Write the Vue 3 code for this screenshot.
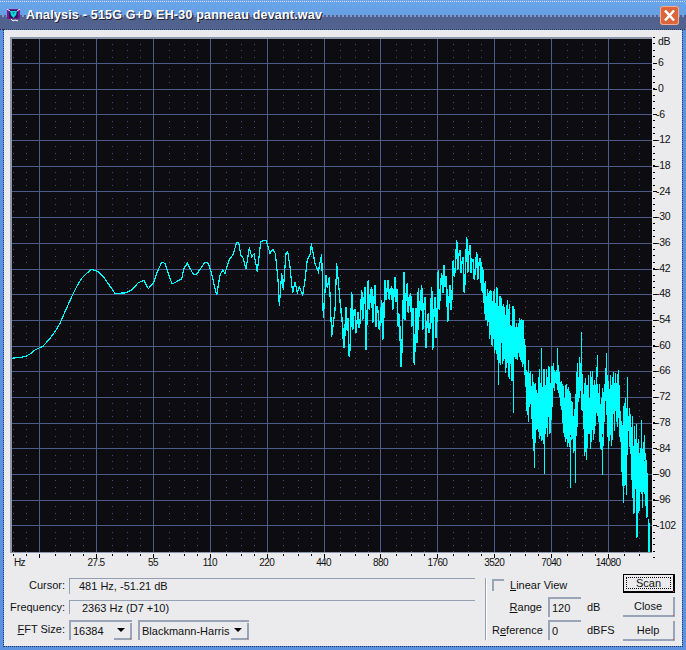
<template>
  <div class="window">
    <div class="titlebar">
      <svg class="app-icon" width="13" height="13" viewBox="0 0 13 13">
        <rect x="0" y="0" width="13" height="10" rx="1" fill="#7a1a92" />
        <rect x="2" y="1" width="9" height="8" fill="#2b1a58" />
        <path d="M3 2h7l-1 4-2.500 3-2.500-3z" fill="#14dcdc" />
        <path d="M5 3h3l-1.500 3z" fill="#0b8fb0" />
        <path d="M0 0l3 2M13 0l-3 2M4 10l2 2 2-1 3 1" stroke="#fff" fill="none" />
      </svg>
      <span class="title">Analysis - 515G G+D EH-30 panneau devant.wav</span>
      <div class="close-x">
        <svg width="19" height="19" viewBox="0 0 19 19">
          <path d="M5 4.500l9 10M14 4.500l-9 10" stroke="#fff" stroke-width="2.600" fill="none" />
        </svg>
      </div>
    </div>

    <div class="client">
      <div class="scope-row">
        <svg class="scope" width="648" height="521" viewBox="10 37 648 521">
          <rect x="10" y="37" width="642" height="516" fill="#8c96aa" />
          <rect x="12" y="39" width="640" height="513" fill="#0d0d11" />
          <path :d="dotPath" stroke="#484e7e" stroke-width="1" shape-rendering="crispEdges" />
          <path :d="gridPath" stroke="#4d5b88" stroke-width="1" fill="none" shape-rendering="crispEdges" />
          <path :d="tickPath" stroke="#000" stroke-width="1" fill="none" shape-rendering="crispEdges" />
          <path :d="lowCurve" stroke="#00ffff" stroke-width="1.200" fill="none" shape-rendering="crispEdges" />
          <path :d="midCurve" stroke="#00ffff" stroke-width="1.500" fill="none" shape-rendering="crispEdges" />
          <path :d="highCurve" stroke="#00ffff" stroke-width="1" fill="none" shape-rendering="crispEdges" />
        </svg>
        <div class="db-axis">
          <div class="db-head">dB</div>
          <div v-for="d in dbLabels" :key="d" class="db-label" :class="{ negative: d < 0 }">{{ d }}</div>
        </div>
      </div>

      <div class="hz-axis">
        <span class="hz-first">Hz</span>
        <span v-for="f in hzLabels" :key="f" class="hz-label">{{ f }}</span>
      </div>

      <div class="controls">
        <div class="left-panel">
          <label class="lbl">Cursor:</label>
          <div class="readout"><span class="cursor-val">481 Hz, -51.21 dB</span></div>
          <label class="lbl">Frequency:</label>
          <div class="readout"><span class="freq-val">2363 Hz (D7 +10)</span></div>
          <label class="lbl fft-lbl"><u>F</u>FT Size:</label>
          <div class="combos">
            <div class="combo size-combo">
              <span>16384</span>
              <div class="combo-btn"><i class="arrow"></i></div>
            </div>
            <div class="combo window-combo">
              <span>Blackmann-Harris</span>
              <div class="combo-btn"><i class="arrow"></i></div>
            </div>
          </div>
        </div>

        <div class="separator"></div>

        <div class="view-panel">
          <div class="linear-row">
            <div class="checkbox"></div>
            <span><u>L</u>inear View</span>
          </div>
          <div class="field-row first-field">
            <span class="field-lbl"><u>R</u>ange</span>
            <div class="edit">120</div>
            <span>dB</span>
          </div>
          <div class="field-row">
            <span class="field-lbl">R<u>e</u>ference</span>
            <div class="edit">0</div>
            <span>dBFS</span>
          </div>
        </div>

        <div class="buttons">
          <button class="btn scan"><span class="focus">Scan</span></button>
          <button class="btn">Close</button>
          <button class="btn">Help</button>
        </div>
      </div>
    </div>
  </div>
</template>

<script setup>
const dbLabels = [6, 0, -6, -12, -18, -24, -30, -36, -42, -48, -54, -60, -66, -72, -78, -84, -90, -96, -102]
const hzLabels = ['27.5', '55', '110', '220', '440', '880', '1760', '3520', '7040', '14080']

const octave = 56.9
const dbStep = 25.69
const majorX = Array.from({ length: 11 }, (_, i) => 39 + i * octave)
const majorY = Array.from({ length: 19 }, (_, i) => 63 + i * dbStep)

function px(v) {
  return Math.round(v) + 0.5
}

let grid = ''
for (const x of majorX) grid += `M${px(x)} 39V552`
for (const y of majorY) grid += `M12 ${px(y)}H652`
const gridPath = grid

// minor frequency positions inside one octave
const minorOffsets = [16, 31, 44]
const minorX = [13, 26]
for (const x of majorX) {
  for (const o of minorOffsets) {
    if (x + o < 652) minorX.push(x + o)
  }
}

let dots = ''
for (const x of minorX) {
  for (let y = 63 - 3 * dbStep / 4 - 0; y < 552; y += dbStep / 4) {
    if (y > 39) dots += `M${px(x)} ${Math.round(y)}v1`
  }
}
const dotPath = dots

let ticks = ''
for (let i = 0; i < 82; i++) {
  const y = 37 + i * dbStep / 4
  ticks += `M653 ${Math.round(y)}h2`
}
for (const y of majorY) ticks += `M653 ${px(y)}h4`
for (const x of majorX) ticks += `M${px(x)} 554v4`
for (const x of minorX) ticks += `M${px(x)} 554v2`
const tickPath = ticks

// traced from the plot, low end is a single clean line
const lowTrace = [
  [36, 385], [50, 383], [75, 380], [90, 372], [105, 360], [130, 348], [150, 325], [165, 305], [180, 280],
  [195, 245], [215, 200], [230, 170], [245, 145], [260, 130], [275, 118], [295, 125], [310, 140], [345, 190],
  [375, 189], [395, 180], [415, 158], [432, 151], [445, 176], [460, 160], [472, 125], [485, 97], [495, 100],
  [516, 162], [545, 147], [552, 115], [562, 100], [580, 133], [590, 133], [600, 118], [615, 97], [625, 100],
  [633, 125], [650, 195], [660, 135], [668, 120], [675, 130], [688, 88], [698, 76], [710, 38], [716, 38],
  [722, 75], [730, 85], [738, 118], [748, 52], [755, 80], [762, 72], [772, 125], [782, 35], [798, 30],
  [810, 70], [818, 58], [826, 70], [835, 160], [838, 228], [845, 130], [850, 180], [858, 70], [863, 65],
  [870, 110], [878, 190], [885, 155], [892, 188], [898, 170], [908, 195], [915, 150], [922, 90], [932, 70],
  [934, 40], [945, 100], [955, 125], [965, 72], [970, 265], [978, 135], [982, 175], [988, 140], [995, 320],
  [1005, 240], [1010, 100], [1020, 210]
]
const lowCurve = 'M' + lowTrace.map(([x, y]) => `${(x / 3).toFixed(1)} ${(230 + y / 3).toFixed(1)}`).join('L')

// [x, top, bottom] of the noisy middle band
const midBand = [
  [68, 290, 355], [78, 230, 300], [85, 310, 380], [95, 185, 300], [105, 240, 310], [115, 245, 295], [125, 180, 270],
  [135, 170, 360], [145, 150, 240], [155, 170, 280], [165, 165, 290], [175, 250, 300], [185, 210, 330],
  [195, 150, 210], [205, 150, 210], [215, 170, 240], [225, 140, 215], [232, 215, 290], [240, 305, 410],
  [252, 125, 270], [262, 160, 250], [272, 190, 290], [280, 235, 405], [288, 235, 340], [295, 175, 260],
  [305, 165, 300], [315, 200, 355], [325, 250, 310], [335, 170, 360], [345, 200, 325], [355, 120, 240],
  [365, 130, 190], [372, 105, 170], [380, 170, 275], [390, 165, 240], [400, 90, 140], [410, 30, 120],
  [420, 60, 130], [430, 80, 190], [440, 20, 130], [450, 45, 130], [460, 90, 150], [470, 65, 150], [480, 85, 160]
]
let mid = `M340 300`
for (const [x, top, bot] of midBand) {
  const rx = 320 + x / 3
  mid += `L${rx.toFixed(1)} ${(230 + top / 3).toFixed(1)}L${(rx + 1).toFixed(1)} ${(230 + bot / 3).toFixed(1)}`
  mid += `L${(rx + 2).toFixed(1)} ${(230 + (top + bot) / 2 / 3).toFixed(1)}`
}
const midCurve = mid

// dense top end, drawn one pixel column at a time
const highBand = [
  [0, -186, -111], [20, -110, 50], [30, -90, 70], [50, -100, 120], [70, -50, 150], [80, -60, 170], [100, -40, 200],
  [110, -10, 120], [130, 0, 150], [140, 150, 310], [150, 120, 320], [160, 190, 400], [170, 190, 350],
  [180, 130, 360], [190, 150, 400], [200, 130, 395], [210, 130, 340], [220, 130, 225], [232, 120, 210],
  [240, 175, 260], [250, 175, 350], [260, 180, 380], [270, 220, 400], [282, 230, 400], [290, 130, 330],
  [300, 100, 230], [310, 190, 410], [320, 160, 410], [335, 140, 390], [350, 140, 290], [360, 180, 400],
  [368, 210, 400], [375, 140, 250], [385, 170, 420], [400, 155, 340], [415, 150, 320], [425, 290, 500],
  [435, 200, 500], [445, 250, 350], [460, 300, 600], [470, 310, 600], [480, 330, 560], [490, 370, 570],
  [500, 420, 600], [505, 610, 695], [510, 690, 695]
]
// deep or tall single spikes that stick out of the band
const spikes = [
  [55, -10, 195], [98, 100, 278], [145, 120, 200], [163, 300, 445], [183, 85, 200], [193, 300, 462],
  [232, 85, 150], [270, 350, 505], [284, 350, 490], [304, 35, 120], [302, 80, 150], [318, 300, 420],
  [350, 105, 170], [366, 350, 465], [377, 100, 170], [428, 400, 548], [438, 400, 525], [440, 170, 300],
  [468, 520, 655], [472, 500, 650], [482, 300, 400], [492, 345, 420], [505, 610, 695], [508, 610, 695]
]
let seed = 515
function rnd() {
  seed = (seed * 16807) % 2147483647
  return seed / 2147483647
}
function sample(x) {
  for (let i = 1; i < highBand.length; i++) {
    if (x <= highBand[i][0]) {
      const a = highBand[i - 1]
      const b = highBand[i]
      const t = (x - a[0]) / (b[0] - a[0])
      return [a[1] + (b[1] - a[1]) * t, a[2] + (b[2] - a[2]) * t]
    }
  }
  return highBand[highBand.length - 1].slice(1)
}
let high = ''
for (let c = 480; c < 650; c++) {
  const [top, bot] = sample((c - 480) * 3)
  const center = (top + bot) / 2
  const t = top + (center - top) * Math.pow(rnd(), 2.2) * 0.7
  const b = bot - (bot - center) * Math.pow(rnd(), 2.2) * 0.7
  high += `M${c}.5 ${(320 + t / 3).toFixed(0)}V${(320 + b / 3).toFixed(0)}`
}
for (const [x, top, bot] of spikes) {
  high += `M${Math.round(480 + x / 3)}.5 ${Math.round(320 + top / 3)}V${Math.round(320 + bot / 3)}`
}
const highCurve = high
</script>

<style scoped>
.window {
  width: 686px;
  height: 650px;
  display: flex;
  flex-direction: column;
  box-sizing: border-box;
  background: #5c92e0;
  font-family: "Liberation Sans", Arial, sans-serif;
  font-size: 11px;
  color: #111;
  overflow: hidden;
}
.titlebar {
  height: 30px;
  flex: none;
  display: flex;
  align-items: center;
  padding: 0 7px;
  box-sizing: border-box;
  background:
    repeating-linear-gradient(90deg, #d5e3f5 0 1px, #6d9fdf 1px 2px) 0 1px / 100% 1px no-repeat,
    repeating-linear-gradient(90deg, #50608f 0 2px, #7c9ad0 2px 4px) 0 15px / 100% 2px no-repeat,
    repeating-linear-gradient(90deg, #1c2a50 0 1px, #6a7aa0 1px 2px) 0 29px / 100% 1px no-repeat,
    linear-gradient(#6aa6ea 0, #659fe4 15px, #52628f 17px, #52628f 100%);
}
.app-icon {
  flex: none;
  margin-right: 6px;
}
.title {
  color: #fff;
  font-weight: bold;
  font-size: 12.500px;
  letter-spacing: 0.2px;
  text-shadow: 1px 1px 0 #223;
  white-space: nowrap;
}
.close-x {
  margin-left: auto;
  width: 19px;
  height: 19px;
  background: #dc6539;
  border-radius: 3px;
  box-shadow: inset 0 0 0 1px #eeb09a;
}
.close-x svg {
  display: block;
}
.client {
  flex: 1;
  margin: 0 4px 4px 4px;
  padding: 7px 0 0 6px;
  background: #ebebee;
  outline: 1px dotted #1d3566;
  min-height: 0;
}
.scope-row {
  display: flex;
  align-items: flex-start;
}
.scope {
  display: block;
  flex: none;
}
.db-axis {
  font-size: 10.500px;
  letter-spacing: -0.3px;
  display: flex;
  flex-direction: column;
}
.db-head {
  height: 13.200px;
  line-height: 9px;
}
.db-label {
  height: 25.690px;
  line-height: 25.690px;
  white-space: nowrap;
}
.negative {
  margin-left: -2px;
}
.hz-axis {
  display: flex;
  height: 15px;
  font-size: 10px;
  letter-spacing: -0.6px;
  line-height: 10px;
}
.hz-first {
  width: 57.600px;
  padding-left: 4px;
  box-sizing: border-box;
  flex: none;
}
.hz-label {
  width: 56.900px;
  flex: none;
  text-align: center;
}
.controls {
  display: flex;
  padding-top: 5px;
}
.left-panel {
  width: 465px;
  flex: none;
  display: grid;
  grid-template-columns: 55px 1fr;
  grid-template-rows: 16px 14px 20px;
  column-gap: 4px;
  row-gap: 6px;
}
.lbl {
  text-align: right;
  line-height: 14px;
  white-space: nowrap;
}
.readout {
  border-top: 1px solid #95a0b4;
  border-left: 1px solid #95a0b4;
  line-height: 14px;
}
.cursor-val {
  padding-left: 9px;
}
.freq-val {
  padding-left: 12px;
}
.fft-lbl {
  line-height: 18px;
}
.combos {
  display: flex;
  gap: 6px;
}
.combo {
  position: relative;
  box-sizing: border-box;
  height: 20px;
  display: flex;
  align-items: center;
  border-top: 2px solid #98a4b8;
  border-left: 2px solid #98a4b8;
  padding-left: 2px;
  white-space: nowrap;
}
.size-combo {
  width: 63px;
}
.window-combo {
  width: 111px;
}
.combo-btn {
  position: absolute;
  right: 0;
  bottom: 0;
  width: 18px;
  height: 17px;
  background: #ebebee;
  border-right: 2px solid #98a4b8;
  border-bottom: 2px solid #98a4b8;
  box-sizing: border-box;
}
.arrow {
  position: absolute;
  left: 3px;
  top: 5px;
  border-left: 4px solid transparent;
  border-right: 4px solid transparent;
  border-top: 4px solid #000;
}
.separator {
  flex: none;
  width: 1px;
  height: 62px;
  margin: 0 5px 0 10px;
  background: #95a0b4;
  border-right: 1px solid #fff;
}
.view-panel {
  width: 131px;
  flex: none;
}
.linear-row {
  display: flex;
  align-items: center;
  height: 14px;
  gap: 6px;
}
.checkbox {
  width: 12px;
  height: 12px;
  box-sizing: border-box;
  border-top: 2px solid #98a4b8;
  border-left: 2px solid #98a4b8;
}
.field-row {
  display: grid;
  grid-template-columns: 50px 33px auto;
  column-gap: 6px;
  align-items: center;
  height: 20px;
  margin-top: 3px;
}
.first-field {
  margin-top: 5px;
}
.field-lbl {
  text-align: right;
  white-space: nowrap;
}
.edit {
  box-sizing: border-box;
  height: 20px;
  line-height: 18px;
  border-top: 2px solid #98a4b8;
  border-left: 2px solid #98a4b8;
  padding-left: 2px;
}
.buttons {
  display: flex;
  flex-direction: column;
  gap: 4px;
  margin-top: -4px;
}
.btn {
  display: block;
  position: relative;
  width: 52px;
  height: 20px;
  padding: 0;
  box-sizing: border-box;
  background: #ebebee;
  border: none;
  border-right: 2px solid #98a4b8;
  border-bottom: 2px solid #98a4b8;
  font: inherit;
  color: #111;
}
.btn::after,
.combo-btn::after {
  content: "";
  position: absolute;
  right: -1px;
  bottom: -1px;
  width: 1px;
  height: 1px;
  background: #d8503c;
}
.scan {
  height: 19px;
  border: 1px solid #000;
  border-right-width: 2px;
  border-bottom-width: 2px;
  padding: 2px;
}
.focus {
  display: block;
  height: 100%;
  box-sizing: border-box;
  border: 1px dotted #000;
  line-height: 11px;
}
</style>

<style>
body {
  margin: 0;
}
</style>
